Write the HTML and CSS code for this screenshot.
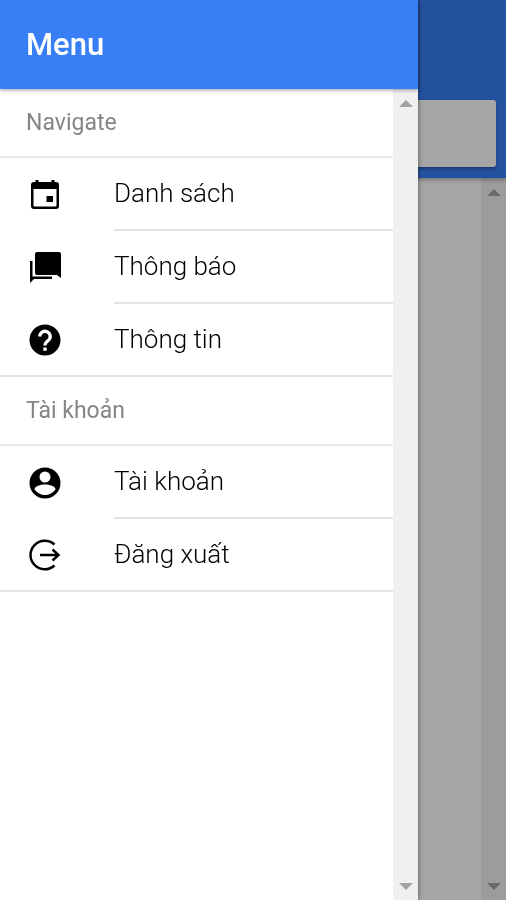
FILE: index.html
```html
<!DOCTYPE html>
<html lang="vi">
<head>
    <meta charset="UTF-8">
    <meta name="viewport" content="width=device-width, initial-scale=1.0">
    <title>Menu</title>
    <link rel="stylesheet" href="styles.css">
</head>
<body>
    <div class="page">
        <header class="page-header">
            <input type="search" class="searchbar" aria-label="Search">
        </header>
        <main class="page-body">
            <div class="page-content"></div>
            <div class="scrollbar" aria-hidden="true">
                <span class="arrow arrow-up"></span>
                <span class="arrow arrow-down"></span>
            </div>
        </main>
    </div>

    <div class="backdrop"></div>

    <!-- Side menu -->
    <aside class="menu">
        <header class="menu-header">
            <h1>Menu</h1>
        </header>
        <div class="menu-body">
            <nav class="menu-content">
                <h2 class="list-header">Navigate</h2>
                <ul class="list">
                    <li>
                        <a href="#list" class="item">
                            <svg class="icon" viewBox="0 0 32 32" aria-hidden="true">
                                <path fill-rule="evenodd" d="M6.500 1h3v2h13V1h3v2H27a3 3 0 0 1 3 3v21a3 3 0 0 1-3 3H5a3 3 0 0 1-3-3V6a3 3 0 0 1 3-3h1.500zM4.500 10v16.500a1 1 0 0 0 1 1h21a1 1 0 0 0 1-1V10z"/>
                                <path d="M17.500 17h6.500v6h-6.500z"/>
                            </svg>
                            <span class="label">Danh sách</span>
                        </a>
                    </li>
                    <li>
                        <a href="#notices" class="item">
                            <svg class="icon" viewBox="0 0 32 32" aria-hidden="true">
                                <path d="M8 0h22a2 2 0 0 1 2 2v24l-4-3H8a2 2 0 0 1-2-2V2a2 2 0 0 1 2-2z"/>
                                <path d="M1 9h2.500v15.500H23V27H5l-4 4z"/>
                            </svg>
                            <span class="label">Thông báo</span>
                        </a>
                    </li>
                    <li>
                        <a href="#info" class="item">
                            <svg class="icon" viewBox="0 0 32 32" aria-hidden="true">
                                <circle cx="16" cy="16" r="15.500"/>
                                <path d="M10.800 12.500a5.200 5.200 0 1 1 8.700 3.800c-2.200 1.700-3.500 2.700-3.500 5.200" fill="none" stroke="#fff" stroke-width="3.300"/>
                                <path d="M14.300 23.500h3.400v3.300h-3.400z" fill="#fff"/>
                            </svg>
                            <span class="label">Thông tin</span>
                        </a>
                    </li>
                </ul>
                <h2 class="list-header">Tài khoản</h2>
                <ul class="list">
                    <li>
                        <a href="#account" class="item">
                            <svg class="icon" viewBox="0 0 32 32" aria-hidden="true">
                                <circle cx="16" cy="16" r="15.500"/>
                                <circle cx="16" cy="10" r="5.500" fill="#fff"/>
                                <path d="M5.500 22.500c0-3.500 6-5 10.500-5s10.500 1.500 10.500 5c-2.500 3.500-6.500 5.500-10.500 5.500s-8-2-10.500-5.500z" fill="#fff"/>
                            </svg>
                            <span class="label">Tài khoản</span>
                        </a>
                    </li>
                    <li>
                        <a href="#logout" class="item">
                            <svg class="icon" viewBox="0 0 32 32" aria-hidden="true">
                                <path d="M25.500 5.500a14.300 14.300 0 1 0 0 21M11 16h18M23.500 10.500l6 5.500-6 5.500" fill="none" stroke="#000" stroke-width="2.500"/>
                            </svg>
                            <span class="label">Đăng xuất</span>
                        </a>
                    </li>
                </ul>
            </nav>
            <div class="scrollbar" aria-hidden="true">
                <span class="arrow arrow-up"></span>
                <span class="arrow arrow-down"></span>
            </div>
        </div>
    </aside>
</body>
</html>
```
FILE: styles.css
```css
* {
    box-sizing: border-box;
}
body {
    margin: 0;
    font-family: Roboto, "Liberation Sans", sans-serif;
    color: #000;
    background-color: #fff;
}
h1, h2, ul {
    margin: 0;
    padding: 0;
    font-weight: normal;
}

/* Page behind the menu */
.page {
    display: flex;
    flex-direction: column;
    min-height: 100vh;
}
.page-header {
    padding: 100px 10px 11px;
    background-color: #387ef5;
    box-shadow: 0 2px 4px rgba(0, 0, 0, 0.3);
    z-index: 1;
}
.searchbar {
    display: block;
    width: 100%;
    height: 67px;
    padding: 0 26px;
    border: none;
    border-radius: 3px;
    background-color: #fff;
    box-shadow: 0 2px 3px rgba(0, 0, 0, 0.3);
    font: inherit;
    font-size: 23px;
}
.page-body {
    display: flex;
    flex: 1;
}
.page-content {
    flex: 1;
}
.backdrop {
    position: fixed;
    inset: 0;
    z-index: 2;
    background-color: rgba(0, 0, 0, 0.35);
}

/* Menu */
.menu {
    position: fixed;
    top: 0;
    bottom: 0;
    left: 0;
    right: 88px;
    z-index: 3;
    display: flex;
    flex-direction: column;
    background-color: #fff;
    box-shadow: 0 0 5px rgba(0, 0, 0, 0.5);
}
.menu-header {
    display: flex;
    align-items: center;
    height: 89px;
    padding: 0 26px;
    background-color: #387ef5;
    color: #fff;
    box-shadow: 0 1px 4px rgba(0, 0, 0, 0.4);
    z-index: 1;
}
.menu-header h1 {
    font-size: 31px;
    font-weight: 500;
}
.menu-body {
    display: flex;
    flex: 1;
    min-height: 0;
}
.menu-content {
    flex: 1;
    overflow: hidden;
}
.list-header {
    padding: 0 26px;
    border-bottom: 2px solid #e9e9e9;
    font-size: 23px;
    line-height: 67px;
    color: #858585;
}
.list {
    list-style: none;
    border-bottom: 2px solid #e4e4e4;
}
.item {
    display: flex;
    align-items: center;
    padding-left: 29px;
    color: #000;
    text-decoration: none;
}
.icon {
    width: 32px;
    height: 32px;
    margin-right: 53px;
}
.label {
    flex: 1;
    border-bottom: 2px solid #e4e4e4;
    font-size: 26px;
    font-weight: 300;
    line-height: 71px;
}
.list li:last-child .label {
    border-bottom: none;
}

/* Scrollbars */
.scrollbar {
    display: flex;
    flex-direction: column;
    justify-content: space-between;
    align-items: center;
    width: 25px;
    padding: 11px 0 10px;
    background-color: #f0f0f0;
}
.arrow {
    border: 7px solid transparent;
}
.arrow-up {
    border-top: none;
    border-bottom-color: #a3a3a3;
}
.arrow-down {
    border-bottom: none;
    border-top-color: #a3a3a3;
}
```
